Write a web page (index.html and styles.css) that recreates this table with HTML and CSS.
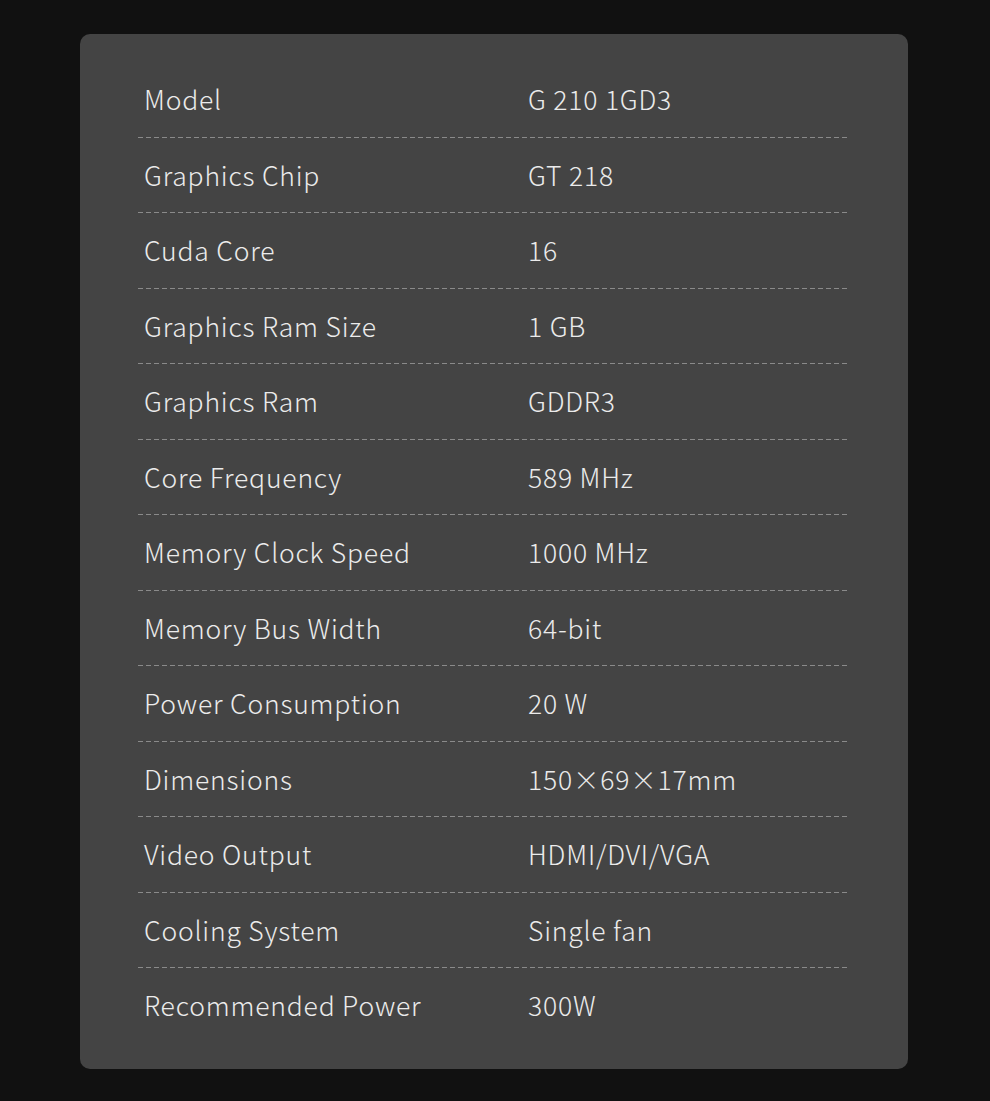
FILE: index.html
```html
<!DOCTYPE html>
<html lang="en">
<head>
<meta charset="utf-8">
<title>Specifications</title>
<link rel="stylesheet" href="styles.css">
</head>
<body>
<main class="page">
  <section class="card">
    <div class="spec"><span class="label">Model</span><span class="value">G 210 1GD3</span></div>
    <div class="spec"><span class="label">Graphics Chip</span><span class="value">GT 218</span></div>
    <div class="spec"><span class="label">Cuda Core</span><span class="value">16</span></div>
    <div class="spec"><span class="label">Graphics Ram Size</span><span class="value">1 GB</span></div>
    <div class="spec"><span class="label">Graphics Ram</span><span class="value">GDDR3</span></div>
    <div class="spec"><span class="label">Core Frequency</span><span class="value">589 MHz</span></div>
    <div class="spec"><span class="label">Memory Clock Speed</span><span class="value">1000 MHz</span></div>
    <div class="spec"><span class="label">Memory Bus Width</span><span class="value">64-bit</span></div>
    <div class="spec"><span class="label">Power Consumption</span><span class="value">20 W</span></div>
    <div class="spec"><span class="label">Dimensions</span><span class="value">150×69×17mm</span></div>
    <div class="spec"><span class="label">Video Output</span><span class="value">HDMI/DVI/VGA</span></div>
    <div class="spec"><span class="label">Cooling System</span><span class="value">Single fan</span></div>
    <div class="spec last"><span class="label">Recommended Power</span><span class="value">300W</span></div>
  </section>
</main>
</body>
</html>
```
FILE: styles.css
```css
html, body {
  margin: 0;
  padding: 0;
  background: #111111;
}
body {
  width: 990px;
  height: 1101px;
  overflow: hidden;
  font-family: "Noto Sans CJK SC", "Noto Sans", sans-serif;
  color: #ebebeb;
}
.page {
  padding: 34px 82px 0 80px;
}
.card {
  background: #444444;
  border-radius: 10px;
  height: 1035px;
  box-sizing: border-box;
  padding: 28px 59px 0 57px;
}
.spec {
  display: grid;
  grid-template-columns: 384px 1fr;
  align-items: center;
  height: 75.5px;
  box-sizing: border-box;
  padding: 0 0 1px 7px;
  font-size: 26.5px;
  font-weight: 300;
  line-height: 1;
  letter-spacing: 0.8px;
  background-image: linear-gradient(to right, transparent 0 1.5px, #8a8a8a 1.5px 6.5px, transparent 6.5px 8px);
  background-size: 8px 1px;
  background-repeat: repeat-x;
  background-position: left bottom;
}
.spec.last {
  background-image: none;
}
.label, .value {
  white-space: nowrap;
}
```
